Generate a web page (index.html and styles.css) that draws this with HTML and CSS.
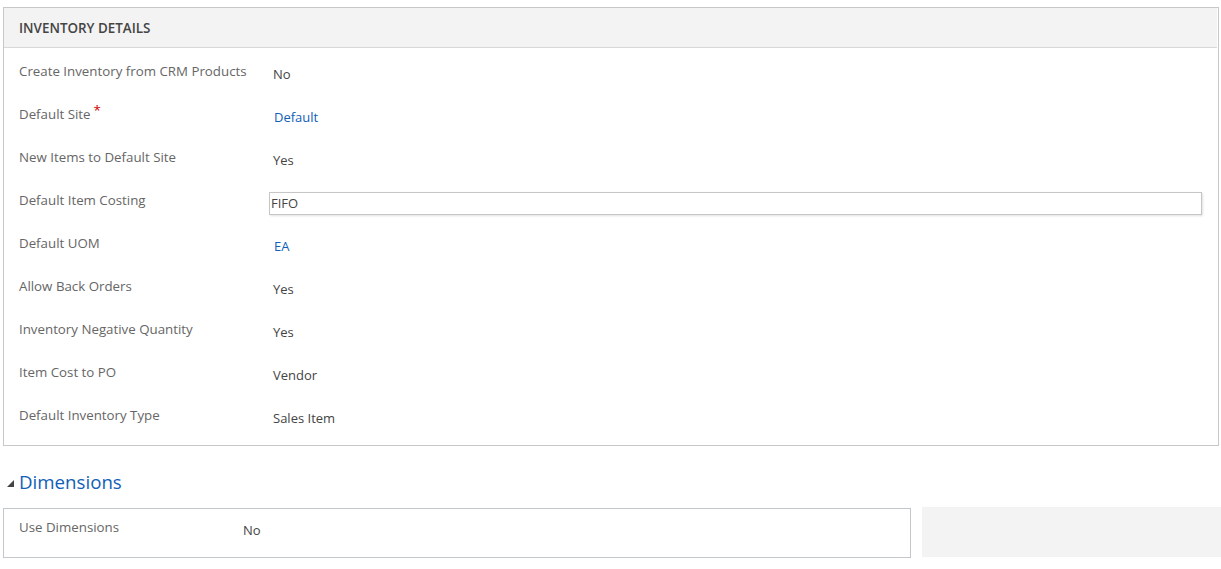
FILE: index.html
```html
<!DOCTYPE html>
<html>
<head>
<meta charset="utf-8">
<link rel="stylesheet" href="styles.css">
</head>
<body>
<div class="page">
  <section class="panel">
    <div class="panel-header">INVENTORY DETAILS</div>
    <div class="fields">
      <div class="label">Create Inventory from CRM Products</div><div class="value">No</div>
      <div class="label">Default Site<span class="req">*</span></div><div class="value link">Default</div>
      <div class="label">New Items to Default Site</div><div class="value">Yes</div>
      <div class="label">Default Item Costing</div><div class="value input-cell"><div class="input">FIFO</div></div>
      <div class="label">Default UOM</div><div class="value link">EA</div>
      <div class="label">Allow Back Orders</div><div class="value">Yes</div>
      <div class="label">Inventory Negative Quantity</div><div class="value">Yes</div>
      <div class="label">Item Cost to PO</div><div class="value">Vendor</div>
      <div class="label">Default Inventory Type</div><div class="value">Sales Item</div>
    </div>
  </section>

  <h2 class="section-title"><svg class="caret" width="7" height="7" viewBox="0 0 7 7"><polygon points="7,0 7,7 0,7" fill="#444"/></svg>Dimensions</h2>

  <div class="dims-row">
    <div class="dims-box">
      <div class="label">Use Dimensions</div><div class="value">No</div>
    </div>
    <div class="dims-side"></div>
  </div>
</div>
</body>
</html>
```
FILE: styles.css
```css
html, body {
  margin: 0;
  padding: 0;
  background: #fff;
}
body {
  font-family: "Open Sans", "Noto Sans", sans-serif;
  font-size: 13px;
  color: #444;
}
.page {
  padding: 7px 0 0 3px;
}
.panel {
  border: 1px solid #c8c8c8;
  margin-right: 2px;
}
.panel-header {
  background: #f3f3f3;
  height: 39px;
  line-height: 40px;
  border-bottom: 1px solid #d8d8d8;
  padding-left: 15px;
  font-weight: 600;
  color: #444;
  font-size: 13.4px;
  margin-right: 1px;
}
.fields {
  display: grid;
  grid-template-columns: 250px 1fr;
  grid-auto-rows: 30px;
  row-gap: 13px;
  padding: 13px 16px 10px 15px;
}
.label {
  color: #666;
  line-height: 20px;
  font-size: 13.3px;
}
.value {
  color: #444;
  line-height: 20px;
  padding-top: 3px;
  padding-left: 4px;
}
.link {
  color: #1160b7;
  padding-left: 5px;
}
.req {
  color: #c00;
  margin-left: 3px;
  position: relative;
  top: -4px;
}
.input-cell {
  padding: 2px 0 0 0;
}
.input {
  border: 1px solid #c6c6c6;
  box-shadow: 1px 1px 2px rgba(0,0,0,0.12);
  height: 21px;
  line-height: 21px;
  padding-left: 1px;
  color: #444;
}
.section-title {
  margin: 23px 0 0 0;
  font-weight: normal;
  font-size: 18.7px;
  line-height: 26px;
  color: #1160b7;
  display: flex;
  align-items: center;
}
.caret {
  margin: 2px 5px 0 4px;
}
.dims-row {
  display: flex;
  gap: 11px;
  margin-top: 13px;
}
.dims-box {
  width: 891px;
  height: 48px;
  border: 1px solid #c2c7c9;
  display: grid;
  grid-template-columns: 220px 1fr;
  padding-left: 15px;
}
.dims-box .label {
  padding-top: 8px;
}
.dims-box .value {
  padding-top: 11px;
}
.dims-side {
  flex: 1;
  background: #f3f3f3;
  height: 50px;
  margin-top: -1px;
}
```
